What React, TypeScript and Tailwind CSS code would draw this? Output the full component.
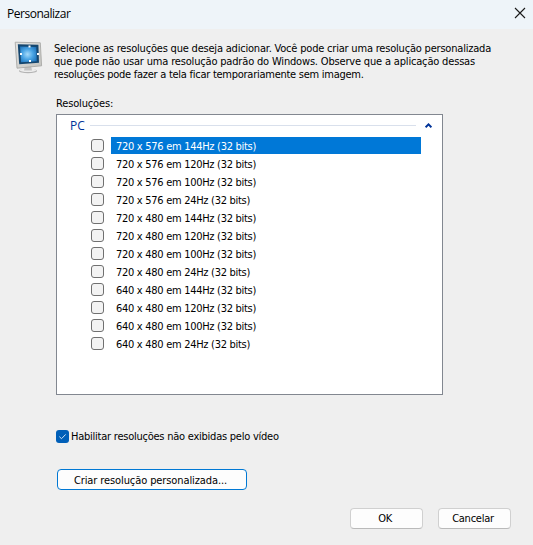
const RESOLUTIONS = [
  '720 x 576 em 144Hz (32 bits)',
  '720 x 576 em 120Hz (32 bits)',
  '720 x 576 em 100Hz (32 bits)',
  '720 x 576 em 24Hz (32 bits)',
  '720 x 480 em 144Hz (32 bits)',
  '720 x 480 em 120Hz (32 bits)',
  '720 x 480 em 100Hz (32 bits)',
  '720 x 480 em 24Hz (32 bits)',
  '640 x 480 em 144Hz (32 bits)',
  '640 x 480 em 120Hz (32 bits)',
  '640 x 480 em 100Hz (32 bits)',
  '640 x 480 em 24Hz (32 bits)',
];

function MonitorIcon() {
  return (
    <svg width="30" height="34" viewBox="0 0 30 34" className="shrink-0">
      <defs>
        <radialGradient id="screen" cx="0.45" cy="0.5" r="0.65">
          <stop offset="0" stopColor="#a5dafa" />
          <stop offset="0.5" stopColor="#49a4e4" />
          <stop offset="1" stopColor="#1c70b8" />
        </radialGradient>
        <linearGradient id="frame" x1="0" y1="0" x2="1" y2="1">
          <stop offset="0" stopColor="#e4e4e2" />
          <stop offset="1" stopColor="#c4c4c0" />
        </linearGradient>
      </defs>
      <ellipse cx="14" cy="29.9" rx="9" ry="2.4" fill="#b4b4b4" />
      <ellipse cx="14" cy="29.3" rx="8.2" ry="1.8" fill="#ececec" />
      <path d="M11 25h6l1 4.5h-8z" fill="#c4c4c4" />
      <path d="M1.2 1.2 26.3 1.8 27.6 24.8 3 27.2z" fill="url(#frame)" stroke="#a2a2a0" strokeWidth="0.8" />
      <path d="M3.8 3.2 24.4 3.8 25 21.8 5.2 23.2z" fill="#14466f" />
      <path d="M6 5.4 22.3 5.9 22.8 20.2 7 21.2z" fill="url(#screen)" />
      <path d="M14.5 4.6h2v2h-2zM15 19h2v2h-2zM6 12h2v2h-2zM23 12h2v2h-2z" fill="#fff" />
    </svg>
  );
}

function Checkbox({ checked = false }: { checked?: boolean }) {
  return checked ? (
    <span className="flex size-[13px] shrink-0 items-center justify-center rounded-[3px] bg-[#005fb8]">
      <svg width="9" height="9" viewBox="0 0 9 9">
        <path d="M1.3 4.6 3.5 6.7 7.7 2.4" fill="none" stroke="#cfe3f5" strokeWidth="1" />
      </svg>
    </span>
  ) : (
    <span className="size-[13px] shrink-0 rounded-[3px] border border-[#707070] bg-[#f3f3f3]" />
  );
}

export default function App() {
  return (
    <div className="flex h-[545px] w-[533px] flex-col overflow-hidden bg-[#efefef] font-['DejaVu_Sans_Condensed','DejaVu_Sans',sans-serif] text-[11px] leading-[13px] whitespace-nowrap text-black [font-stretch:condensed]">
      <header className="flex h-[29px] shrink-0 items-center justify-between bg-[#eef4f9] pr-[7px] pl-[7px]">
        <h1 className="-mt-px font-['Open_Sans','Noto_Sans',sans-serif] text-[12px] leading-4 tracking-[-0.48px] [font-stretch:normal]">Personalizar</h1>
        <svg width="12" height="12" viewBox="0 0 12 12" className="-mt-[3px]">
          <path d="M1 1 11 11M11 1 1 11" stroke="#1a1a1a" strokeWidth="1.1" />
        </svg>
      </header>

      <div className="flex h-[66px] shrink-0 pt-[12px] pl-[14px]">
        <MonitorIcon />
        <div className="flex flex-col items-start pt-[1px] pl-[10px]">
          <p className="tracking-[-0.2px]">Selecione as resoluções que deseja adicionar. Você pode criar uma resolução personalizada</p>
          <p className="tracking-[-0.175px]">que pode não usar uma resolução padrão do Windows. Observe que a aplicação dessas</p>
          <p className="tracking-[-0.26px]">resoluções pode fazer a tela ficar temporariamente sem imagem.</p>
        </div>
      </div>

      <main className="flex flex-col items-start pl-14">
        <span className="h-[19px] pt-[2px] tracking-[-0.15px]">Resoluções:</span>
        <section className="h-[281px] w-[387px] border border-[#828790] bg-white">
          <div className="flex h-[21px] items-center pr-[10px] pl-[13px]">
            <span className="font-['Open_Sans','Noto_Sans',sans-serif] text-[12px] leading-4 text-[#003399] [font-stretch:normal]">PC</span>
            <span className="ml-[5px] h-px grow bg-[#d9e0ec]" />
            <svg width="7" height="5" viewBox="0 0 7 5" className="ml-[9px]">
              <path d="M.6 4.3 3.5 1.4 6.4 4.3" fill="none" stroke="#003399" strokeWidth="2" />
            </svg>
          </div>
          <ul>
            {RESOLUTIONS.map((label, index) => (
              <li key={label} className="flex h-[18px] items-center pl-[34px] tracking-[-0.29px]">
                <Checkbox />
                <span
                  className={
                    index === 0
                      ? 'ml-[7px] h-[17px] w-[310px] bg-[#0078d7] pt-[3px] pl-[5px] text-white'
                      : 'ml-[7px] h-[17px] w-[310px] pt-[3px] pl-[5px]'
                  }
                >
                  {label}
                </span>
              </li>
            ))}
          </ul>
        </section>

        <label className="mt-[35px] flex items-center gap-[2px] tracking-[-0.24px]">
          <Checkbox checked />
          <span>Habilitar resoluções não exibidas pelo vídeo</span>
        </label>

        <button className="mt-[26px] ml-px h-[21px] w-[190px] rounded-[4px] border border-[#0078d4] bg-[#fdfdfd] pt-px pr-[3px] tracking-[-0.1px]">
          Criar resolução personalizada...
        </button>
      </main>

      <footer className="mt-[18px] flex justify-end gap-[15px] pr-[22px]">
        <button className="h-[21px] w-[73px] rounded-[4px] border border-[#d0d0d0] border-b-[#bababa] bg-[#fdfdfd] pr-[3px] tracking-[-0.4px]">OK</button>
        <button className="h-[21px] w-[73px] rounded-[4px] border border-[#d0d0d0] border-b-[#bababa] bg-[#fdfdfd] pr-[3px] tracking-[-0.24px]">Cancelar</button>
      </footer>
    </div>
  );
}
